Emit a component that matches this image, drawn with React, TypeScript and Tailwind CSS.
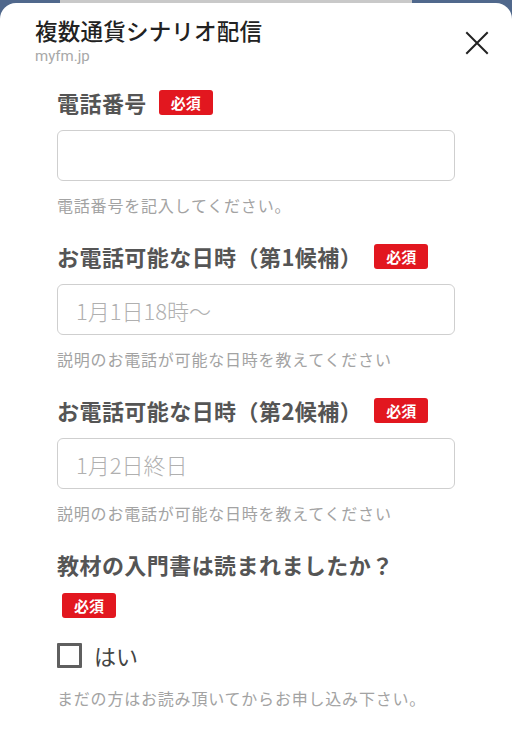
type FieldProps = {
  label: string;
  placeholder?: string;
  help: string;
};

const Badge = () => (
  <span className="ml-[5px] inline-flex h-[25px] w-[54px] items-center justify-center rounded-[3px] bg-[#e2171f] text-[15px] font-bold leading-none text-white">
    必須
  </span>
);

const Field = ({ label, placeholder, help }: FieldProps) => (
  <div className="mb-[23px]">
    <div className="flex h-[32px] items-center gap-x-[7px]">
      <span className="text-[22px] font-bold tracking-[0.02em] text-[#555]">{label}</span>
      <Badge />
    </div>
    <input
      className="mt-[12px] block h-[51px] w-full rounded-[6px] border border-[#cfcfcf] px-[18px] text-[22px] font-light text-[#333] outline-none placeholder:text-[#b0b0b0]"
      placeholder={placeholder}
    />
    <p className="mt-[12px] h-[24px] whitespace-nowrap text-[16px] leading-[24px] tracking-[0.05em] text-[#a3a3a3]">{help}</p>
  </div>
);

export default function App() {
  return (
    <div
      className="min-h-[754px] w-[512px] bg-[#50688c]"
      style={{ fontFamily: '"Noto Sans CJK JP", "Noto Sans", sans-serif' }}
    >
      <div className="flex h-[3px]">
        <div className="w-[60px]" />
        <div className="flex-1 bg-[#c9c9c9]" />
        <div className="w-[100px]" />
      </div>
      <div className="h-[751px] rounded-t-[16px] bg-white">
        <div className="flex items-start justify-between pl-[35px] pr-[23px] pt-[11px]">
          <div>
            <h1 className="text-[22.5px] font-medium leading-[32px] tracking-[0.01em] text-[#222]">
              複数通貨シナリオ配信
            </h1>
            <p className="text-[15px] leading-[20px] text-[#a8a8a8]" style={{ fontFamily: 'Roboto, sans-serif' }}>
              myfm.jp
            </p>
          </div>
          <svg className="mt-[17px]" width="24" height="24" viewBox="0 0 24 24" fill="none" stroke="#222" strokeWidth="2" strokeLinecap="square">
            <path d="M2 2L22 22M22 2L2 22" />
          </svg>
        </div>

        <div className="px-[57px] pt-[20px]">
          <Field label="電話番号" help="電話番号を記入してください。" />
          <Field label="お電話可能な日時（第1候補）" placeholder="1月1日18時〜" help="説明のお電話が可能な日時を教えてください" />
          <Field label="お電話可能な日時（第2候補）" placeholder="1月2日終日" help="説明のお電話が可能な日時を教えてください" />

          <div className="flex flex-wrap items-center gap-x-[7px] gap-y-[13px]">
            <span className="h-[32px] text-[22px] font-bold leading-[32px] tracking-[0.02em] text-[#555]">
              教材の入門書は読まれましたか？
            </span>
            <Badge />
          </div>
          <label className="mt-[25px] flex items-center gap-[12px]">
            <span className="block h-[25px] w-[25px] rounded-[1px] border-[3px] border-[#5f5f5f]" />
            <span className="text-[22px] leading-[25px] text-[#444]">はい</span>
          </label>
          <p className="mt-[18px] h-[24px] whitespace-nowrap text-[16px] leading-[24px] tracking-[0.05em] text-[#a3a3a3]">
            まだの方はお読み頂いてからお申し込み下さい。
          </p>
        </div>
      </div>
    </div>
  );
}
